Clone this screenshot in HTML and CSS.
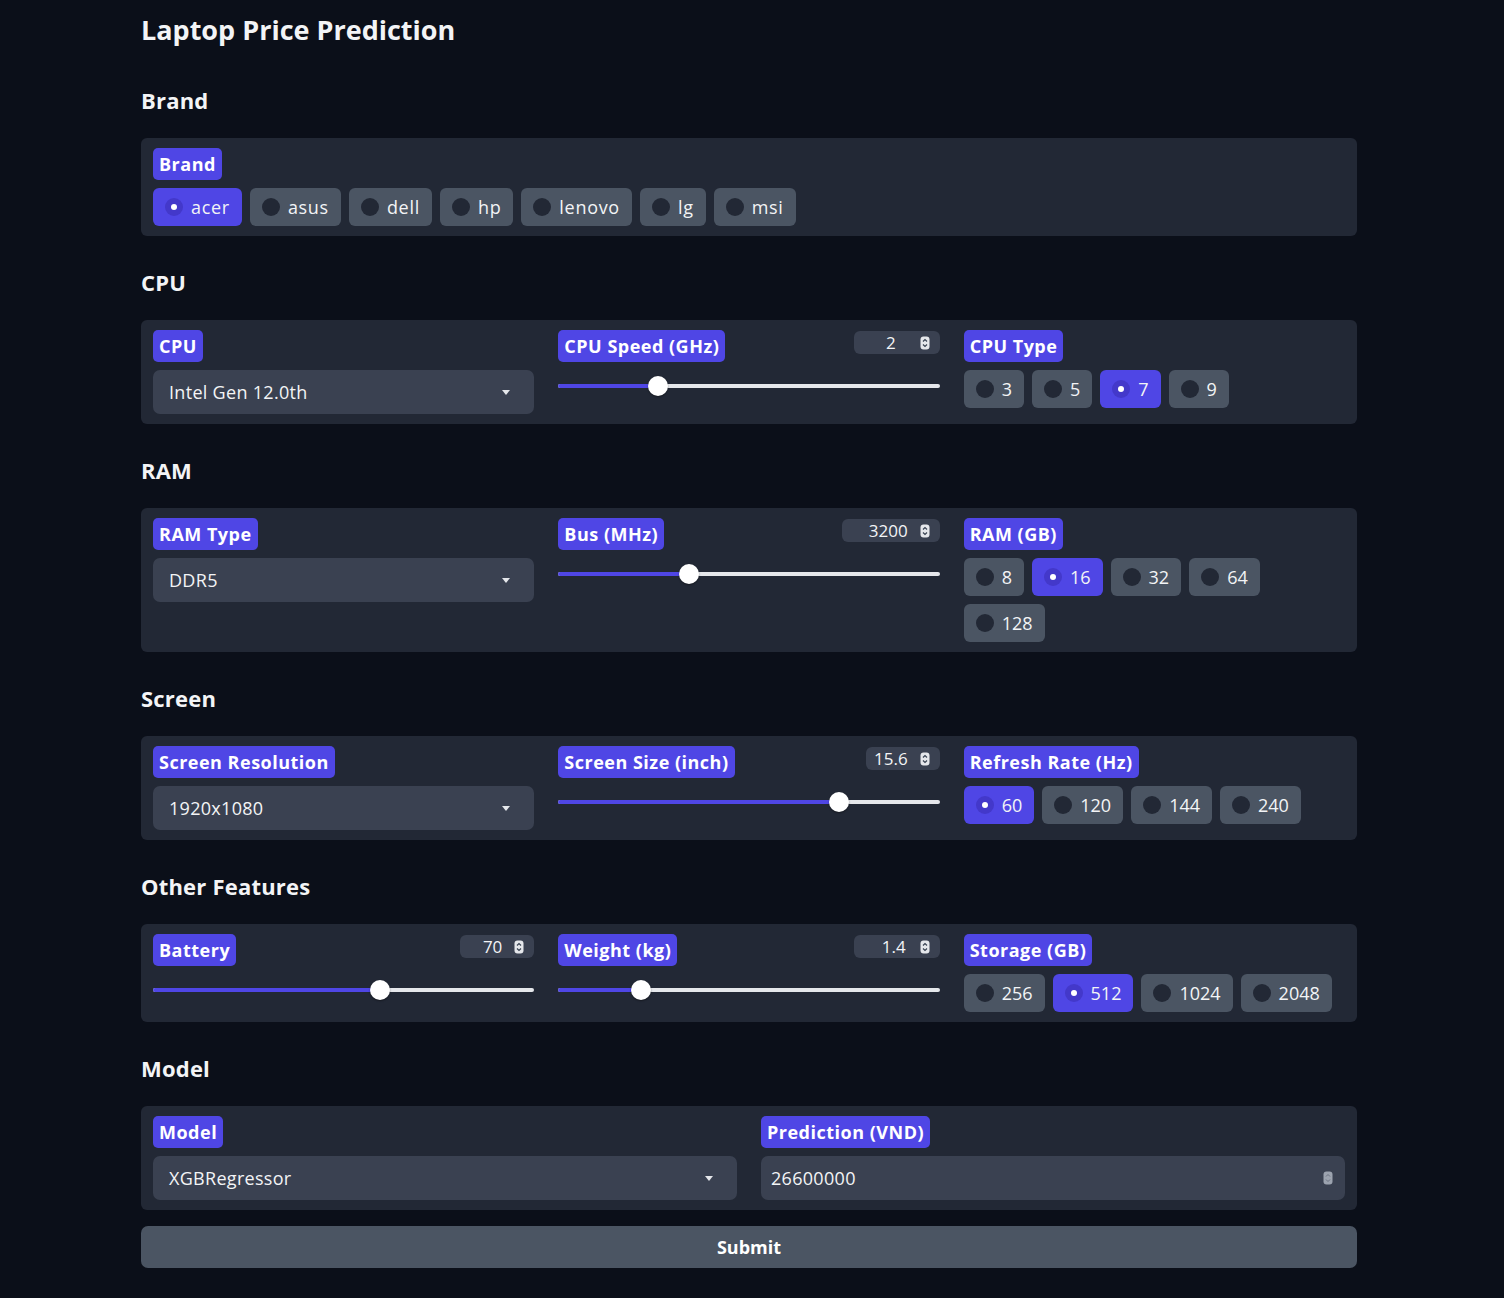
FILE: index.html
```html
<!DOCTYPE html>
<html lang="en">
<head>
<meta charset="utf-8">
<title>Laptop Price Prediction</title>
<link rel="stylesheet" href="styles.css">
</head>
<body>
<div class="app">
  <h1 class="title">Laptop Price Prediction</h1>

  <h2 class="section-title">Brand</h2>
  <div class="panel">
    <div class="field">
      <span class="badge">Brand</span>
      <div class="radios">
        <span class="radio selected"><span class="dot"></span>acer</span>
        <span class="radio"><span class="dot"></span>asus</span>
        <span class="radio"><span class="dot"></span>dell</span>
        <span class="radio"><span class="dot"></span>hp</span>
        <span class="radio"><span class="dot"></span>lenovo</span>
        <span class="radio"><span class="dot"></span>lg</span>
        <span class="radio"><span class="dot"></span>msi</span>
      </div>
    </div>
  </div>

  <h2 class="section-title">CPU</h2>
  <div class="panel cols-3">
    <div class="field">
      <span class="badge">CPU</span>
      <div class="dropdown"><span>Intel Gen 12.0th</span><svg class="caret" width="8" height="5" viewBox="0 0 8 5"><path d="M0 0h8L4 5z" fill="#e5e7eb"/></svg></div>
    </div>
    <div class="field">
      <div class="slider-head">
        <span class="badge">CPU Speed (GHz)</span>
        <span class="numbox numbox-wide"><span class="num">2</span><svg class="spin" width="10" height="14" viewBox="0 0 10 14"><rect x="0.5" y="0.5" width="9" height="13" rx="3" fill="#e5e7eb"/><path d="M3 5.5l2-2 2 2M3 8.5l2 2 2-2" stroke="#374151" stroke-width="1.2" fill="none"/></svg></span>
      </div>
      <div class="slider"><span class="track"></span><span class="fill" style="width:26.2%"></span><span class="thumb" style="left:26.2%"></span></div>
    </div>
    <div class="field">
      <span class="badge">CPU Type</span>
      <div class="radios numeric">
        <span class="radio"><span class="dot"></span>3</span>
        <span class="radio"><span class="dot"></span>5</span>
        <span class="radio selected"><span class="dot"></span>7</span>
        <span class="radio"><span class="dot"></span>9</span>
      </div>
    </div>
  </div>

  <h2 class="section-title">RAM</h2>
  <div class="panel cols-3">
    <div class="field">
      <span class="badge">RAM Type</span>
      <div class="dropdown"><span>DDR5</span><svg class="caret" width="8" height="5" viewBox="0 0 8 5"><path d="M0 0h8L4 5z" fill="#e5e7eb"/></svg></div>
    </div>
    <div class="field">
      <div class="slider-head">
        <span class="badge">Bus (MHz)</span>
        <span class="numbox numbox-bus"><span class="num">3200</span><svg class="spin" width="10" height="14" viewBox="0 0 10 14"><rect x="0.5" y="0.5" width="9" height="13" rx="3" fill="#e5e7eb"/><path d="M3 5.5l2-2 2 2M3 8.5l2 2 2-2" stroke="#374151" stroke-width="1.2" fill="none"/></svg></span>
      </div>
      <div class="slider"><span class="track"></span><span class="fill" style="width:34.3%"></span><span class="thumb" style="left:34.3%"></span></div>
    </div>
    <div class="field">
      <span class="badge">RAM (GB)</span>
      <div class="radio-rows">
        <div class="radios numeric">
          <span class="radio"><span class="dot"></span>8</span>
          <span class="radio selected"><span class="dot"></span>16</span>
          <span class="radio"><span class="dot"></span>32</span>
          <span class="radio"><span class="dot"></span>64</span>
        </div>
        <div class="radios numeric">
          <span class="radio"><span class="dot"></span>128</span>
        </div>
      </div>
    </div>
  </div>

  <h2 class="section-title">Screen</h2>
  <div class="panel cols-3">
    <div class="field">
      <span class="badge">Screen Resolution</span>
      <div class="dropdown"><span>1920x1080</span><svg class="caret" width="8" height="5" viewBox="0 0 8 5"><path d="M0 0h8L4 5z" fill="#e5e7eb"/></svg></div>
    </div>
    <div class="field">
      <div class="slider-head">
        <span class="badge">Screen Size (inch)</span>
        <span class="numbox numbox-narrow"><span class="num">15.6</span><svg class="spin" width="10" height="14" viewBox="0 0 10 14"><rect x="0.5" y="0.5" width="9" height="13" rx="3" fill="#e5e7eb"/><path d="M3 5.5l2-2 2 2M3 8.5l2 2 2-2" stroke="#374151" stroke-width="1.2" fill="none"/></svg></span>
      </div>
      <div class="slider"><span class="track"></span><span class="fill" style="width:73.6%"></span><span class="thumb" style="left:73.6%"></span></div>
    </div>
    <div class="field">
      <span class="badge">Refresh Rate (Hz)</span>
      <div class="radios numeric">
        <span class="radio selected"><span class="dot"></span>60</span>
        <span class="radio"><span class="dot"></span>120</span>
        <span class="radio"><span class="dot"></span>144</span>
        <span class="radio"><span class="dot"></span>240</span>
      </div>
    </div>
  </div>

  <h2 class="section-title">Other Features</h2>
  <div class="panel cols-3">
    <div class="field">
      <div class="slider-head">
        <span class="badge">Battery</span>
        <span class="numbox numbox-narrow"><span class="num">70</span><svg class="spin" width="10" height="14" viewBox="0 0 10 14"><rect x="0.5" y="0.5" width="9" height="13" rx="3" fill="#e5e7eb"/><path d="M3 5.5l2-2 2 2M3 8.5l2 2 2-2" stroke="#374151" stroke-width="1.2" fill="none"/></svg></span>
      </div>
      <div class="slider"><span class="track"></span><span class="fill" style="width:59.6%"></span><span class="thumb" style="left:59.6%"></span></div>
    </div>
    <div class="field">
      <div class="slider-head">
        <span class="badge">Weight (kg)</span>
        <span class="numbox numbox-mid"><span class="num">1.4</span><svg class="spin" width="10" height="14" viewBox="0 0 10 14"><rect x="0.5" y="0.5" width="9" height="13" rx="3" fill="#e5e7eb"/><path d="M3 5.5l2-2 2 2M3 8.5l2 2 2-2" stroke="#374151" stroke-width="1.2" fill="none"/></svg></span>
      </div>
      <div class="slider"><span class="track"></span><span class="fill" style="width:21.7%"></span><span class="thumb" style="left:21.7%"></span></div>
    </div>
    <div class="field">
      <span class="badge">Storage (GB)</span>
      <div class="radios numeric">
        <span class="radio"><span class="dot"></span>256</span>
        <span class="radio selected"><span class="dot"></span>512</span>
        <span class="radio"><span class="dot"></span>1024</span>
        <span class="radio"><span class="dot"></span>2048</span>
      </div>
    </div>
  </div>

  <h2 class="section-title">Model</h2>
  <div class="panel cols-2">
    <div class="field">
      <span class="badge">Model</span>
      <div class="dropdown"><span>XGBRegressor</span><svg class="caret" width="8" height="5" viewBox="0 0 8 5"><path d="M0 0h8L4 5z" fill="#e5e7eb"/></svg></div>
    </div>
    <div class="field">
      <span class="badge">Prediction (VND)</span>
      <div class="textbox"><span>26600000</span><svg class="spin" width="10" height="14" viewBox="0 0 10 14"><rect x="0.5" y="0.5" width="9" height="13" rx="3" fill="#9ca3af"/><path d="M3 5.5l2-2 2 2M3 8.5l2 2 2-2" stroke="#6b7280" stroke-width="1" fill="none"/></svg></div>
    </div>
  </div>

  <button class="submit">Submit</button>
</div>
</body>
</html>
```
FILE: styles.css
```css
* { box-sizing: border-box; }
html, body { margin: 0; padding: 0; }
body {
  background: #0b0f19;
  color: #f3f4f6;
  font-family: "Open Sans", "Noto Sans", sans-serif;
  min-height: 1298px;
}
.app {
  width: 1216px;
  margin-left: 141px;
  padding-bottom: 30px;
}
.title {
  margin: 12px 0 0;
  font-size: 27px;
  line-height: 36px;
  font-weight: 700;
  color: #f3f4f6;
}
.section-title {
  margin: 31px 0 23px;
  font-size: 22px;
  line-height: 30px;
  font-weight: 700;
  letter-spacing: 0.2px;
  color: #f3f4f6;
}
.title + .section-title { margin-top: 37px; }
.panel {
  background: #222835;
  border-radius: 6px;
  padding: 10px 12px;
}
.cols-3 { display: grid; grid-template-columns: repeat(3, 1fr); column-gap: 24px; }
.cols-2 { display: grid; grid-template-columns: repeat(2, 1fr); column-gap: 24px; }
.field {
  display: flex;
  flex-direction: column;
  align-items: stretch;
  gap: 8px;
  min-width: 0;
}
.badge {
  align-self: flex-start;
  background: #4f46e5;
  color: #fff;
  font-weight: 700;
  font-size: 18px;
  letter-spacing: 0.5px;
  height: 32px;
  line-height: 32px;
  padding: 0 6px;
  border-radius: 5px;
  white-space: nowrap;
}
.radios {
  display: flex;
  flex-wrap: wrap;
  gap: 8px;
}
.radio-rows { display: flex; flex-direction: column; gap: 8px; }
.radio {
  display: inline-flex;
  align-items: center;
  gap: 8px;
  height: 38px;
  padding: 0 12px;
  background: #4b5563;
  border-radius: 6px;
  font-size: 18px;
  letter-spacing: 0.7px;
  color: #f3f4f6;
}
.radios.numeric .radio { letter-spacing: 0; }
.radio .dot {
  width: 18px;
  height: 18px;
  border-radius: 50%;
  background: #222835;
  flex: none;
  position: relative;
}
.radio.selected { background: #4f46e5; }
.radio.selected .dot { background: #4338ca; }
.radio.selected .dot::after {
  content: "";
  position: absolute;
  left: 6px; top: 6px;
  width: 6px; height: 6px;
  border-radius: 50%;
  background: #fff;
}
.dropdown, .textbox {
  height: 44px;
  background: #3a4151;
  border-radius: 7px;
  display: flex;
  align-items: center;
  justify-content: space-between;
  padding: 0 24px 0 16px;
  font-size: 18px;
  letter-spacing: 0.3px;
  color: #f3f4f6;
}
.textbox { padding: 0 12px 0 10px; }
.slider-head {
  display: flex;
  justify-content: space-between;
  align-items: flex-start;
}
.numbox {
  height: 23px;
  margin-top: 1px;
  background: #3a4151;
  border-radius: 6px;
  display: flex;
  align-items: center;
  justify-content: flex-end;
  gap: 12px;
  padding: 0 10px 0 0;
  font-size: 17px;
  color: #f3f4f6;
}
.numbox .spin { flex: none; }
.numbox-wide { width: 86px; gap: 24px; }
.numbox-mid { width: 86px; gap: 14px; }
.numbox-narrow { width: 74px; }
.numbox-bus { width: 98px; }
.slider {
  position: relative;
  height: 20px;
  margin-top: 6px;
}
.slider .track {
  position: absolute;
  left: 0; right: 0;
  top: 8px;
  height: 4px;
  border-radius: 2px;
  background: #e5e7eb;
}
.slider .fill {
  position: absolute;
  left: 0;
  top: 8px;
  height: 4px;
  border-radius: 2px;
  background: #4f46e5;
}
.slider .thumb {
  position: absolute;
  top: 0;
  width: 20px;
  height: 20px;
  margin-left: -10px;
  border-radius: 50%;
  background: #fff;
  box-shadow: 0 1px 2px rgba(0,0,0,0.4);
}
.submit {
  display: block;
  width: 100%;
  height: 42px;
  margin-top: 16px;
  border: 0;
  border-radius: 7px;
  background: #4b5563;
  color: #fff;
  font-family: inherit;
  font-weight: 700;
  font-size: 18px;
}
```
